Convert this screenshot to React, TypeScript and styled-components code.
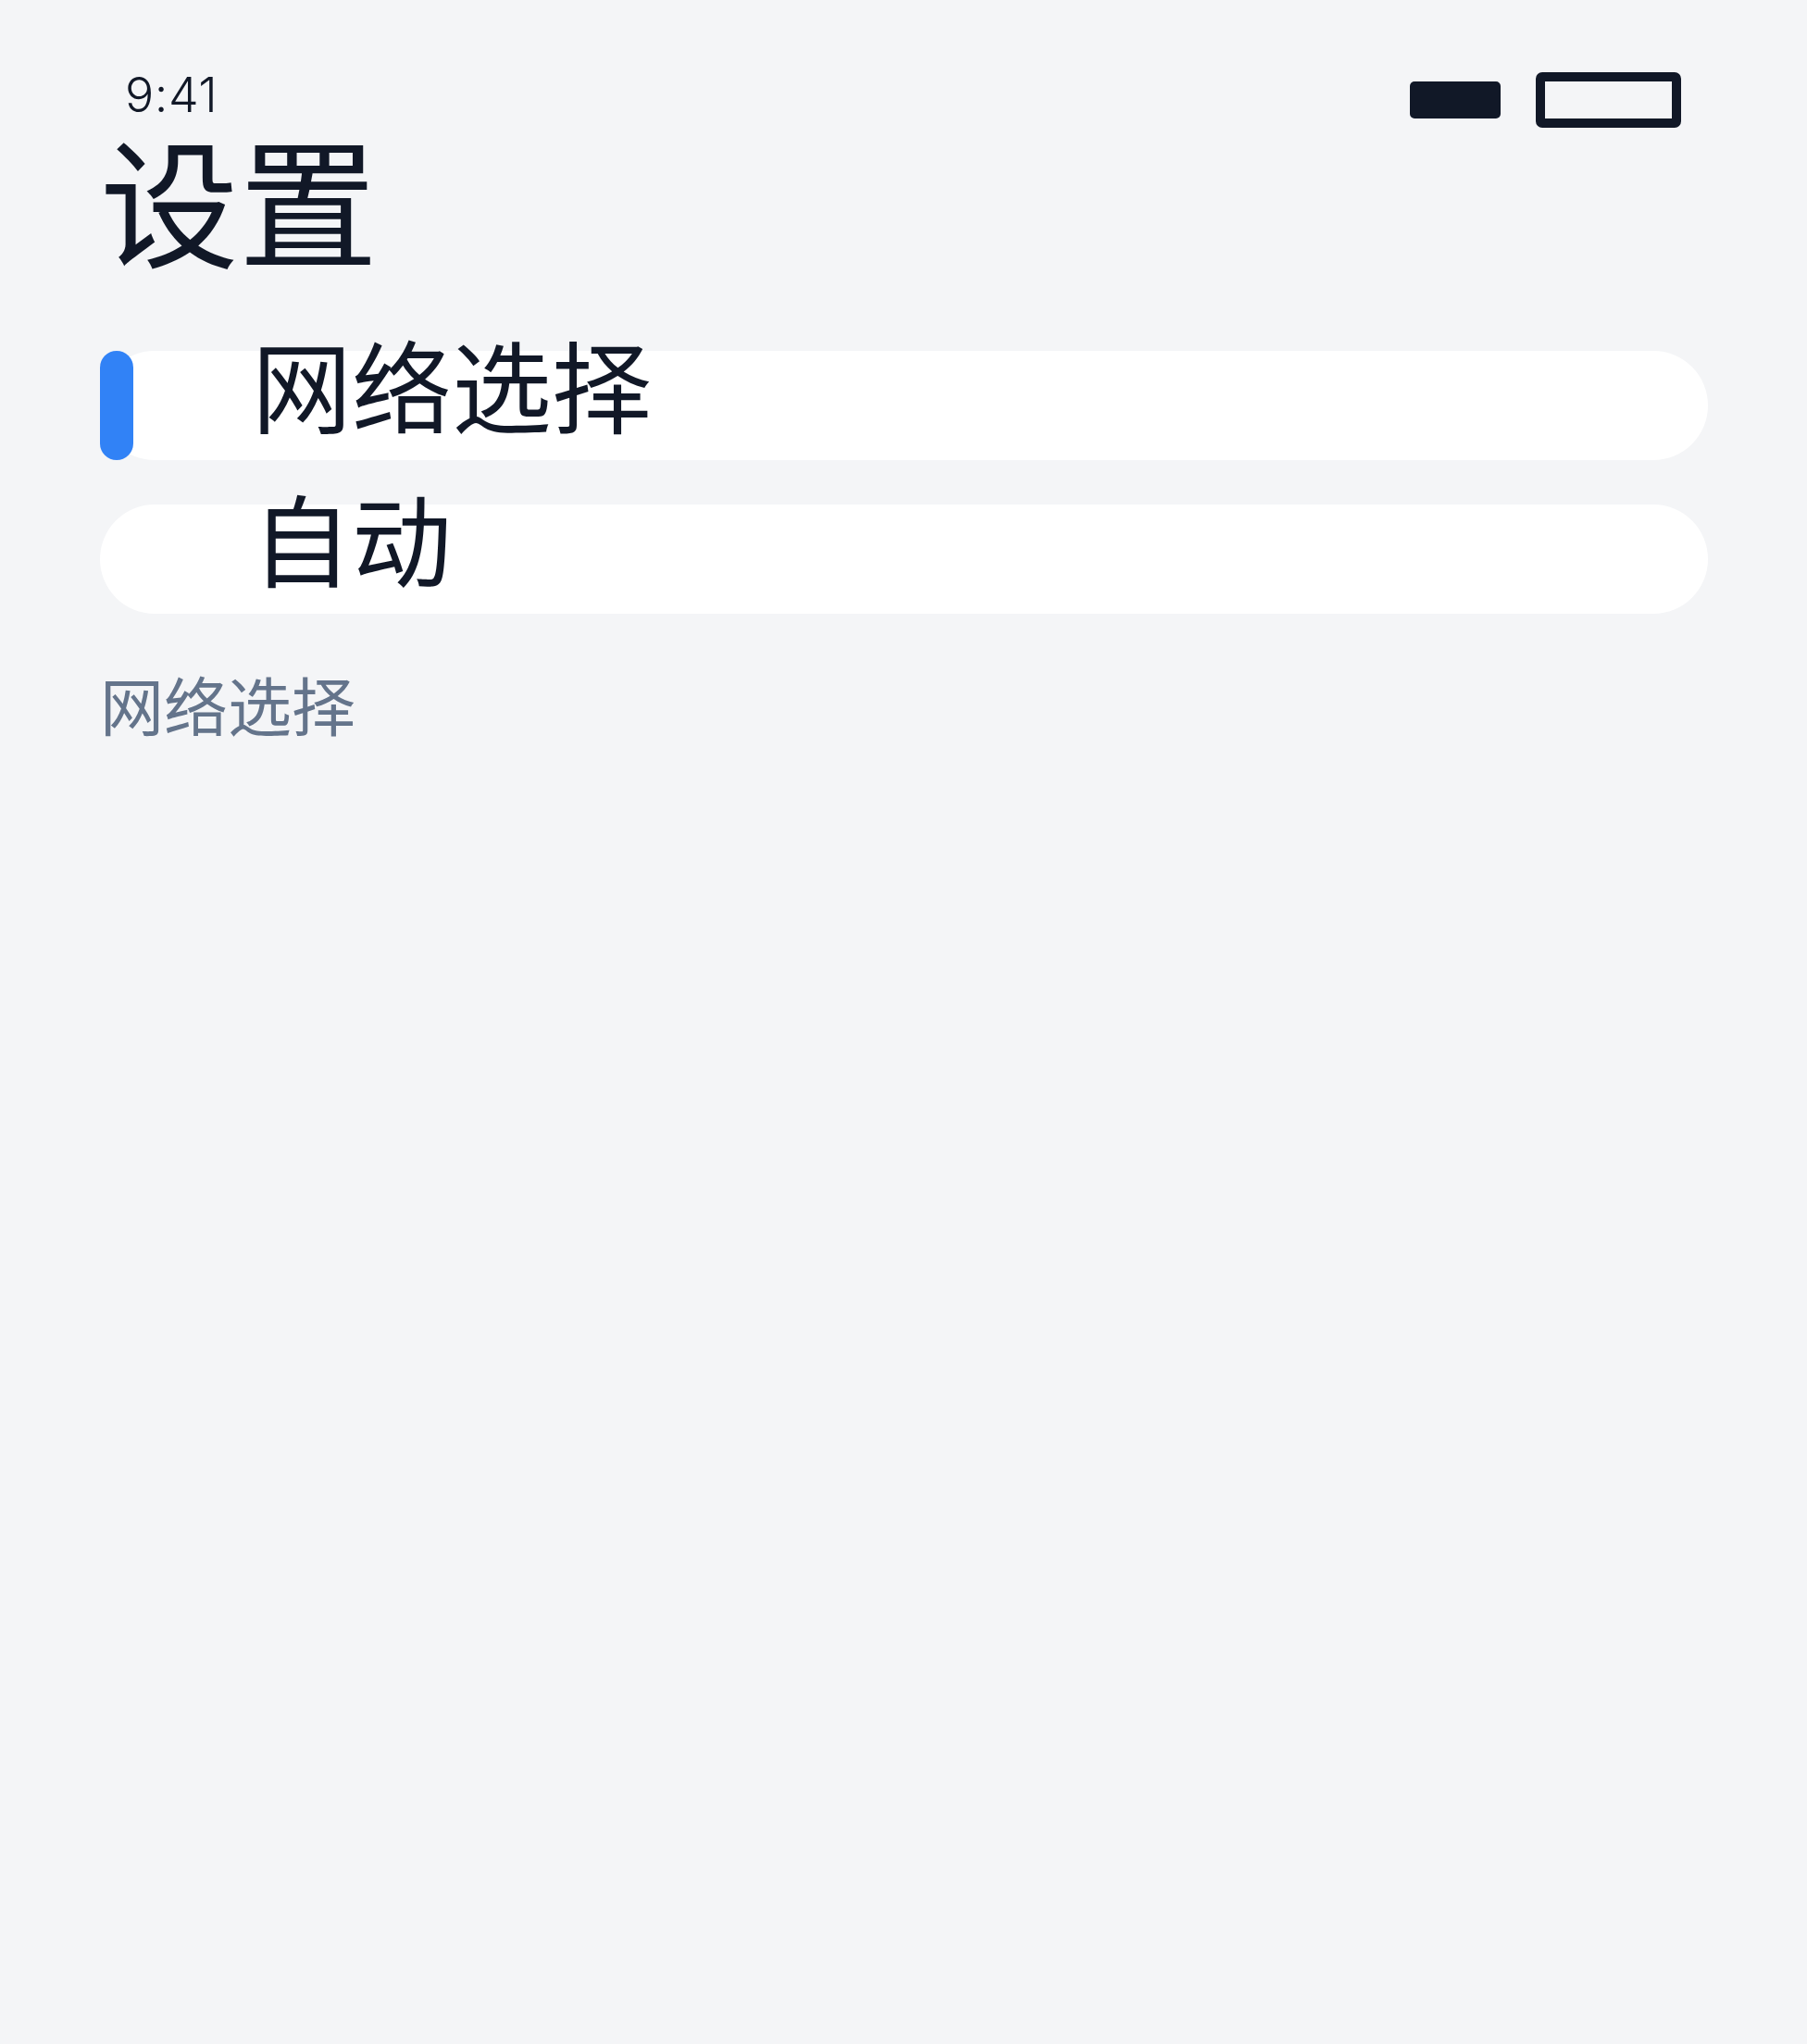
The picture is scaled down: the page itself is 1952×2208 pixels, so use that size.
import React from "react";
import styled, { createGlobalStyle } from "styled-components";

const GlobalStyle = createGlobalStyle`
  html, body {
    margin: 0;
    padding: 0;
    background: #f4f5f7;
  }
  body {
    font-family: "Noto Sans CJK SC", "Noto Sans", sans-serif;
    color: #111827;
  }
`;

const Page = styled.div`
  min-height: 2208px;
  box-sizing: border-box;
  padding: 78px 107px 0 108px;
  background: #f4f5f7;
  display: flex;
  flex-direction: column;
`;

const StatusBar = styled.div`
  display: flex;
  justify-content: space-between;
  align-items: flex-start;
  height: 60px;
  padding: 0 29px 0 27px;
`;

const Time = styled.span`
  font-family: Inter, "Liberation Sans", sans-serif;
  font-weight: 300;
  font-size: 52px;
  line-height: 52px;
  letter-spacing: 0.5px;
  color: #111827;
  margin-top: -1px;
`;

const StatusIcons = styled.div`
  display: flex;
  align-items: center;
  gap: 38px;
  height: 60px;
`;

const Signal = styled.div`
  width: 98px;
  height: 40px;
  border-radius: 5px;
  background: #111827;
`;

const Battery = styled.div`
  box-sizing: border-box;
  width: 157px;
  height: 60px;
  border: 10px solid #111827;
  border-radius: 7px;
`;

const Title = styled.h1`
  margin: 0;
  font-size: 150px;
  font-weight: 400;
  line-height: 150px;
  color: #111827;
`;

const List = styled.div`
  display: flex;
  flex-direction: column;
  gap: 48px;
  margin-top: 91px;
`;

const Row = styled.div`
  position: relative;
  display: flex;
  align-items: flex-start;
  height: 118px;
  border-radius: 59px;
  background: #ffffff;
  padding-left: 164px;
`;

const Indicator = styled.div`
  position: absolute;
  left: 0;
  top: 0;
  width: 36px;
  height: 100%;
  border-radius: 18px;
  background: #3182f6;
`;

const RowLabel = styled.span`
  font-size: 108px;
  line-height: 108px;
  margin-top: -20px;
  color: #111827;
`;

const SectionLabel = styled.div`
  margin-top: 62px;
  font-size: 69px;
  line-height: 70px;
  color: #64748b;
`;

const items = [
  { label: "网络选择", active: true },
  { label: "自动", active: false },
];

export default function App() {
  return (
    <>
      <GlobalStyle />
      <Page>
        <StatusBar>
          <Time>9:41</Time>
          <StatusIcons>
            <Signal />
            <Battery />
          </StatusIcons>
        </StatusBar>
        <Title>设置</Title>
        <List>
          {items.map((it) => (
            <Row key={it.label}>
              {it.active && <Indicator />}
              <RowLabel>{it.label}</RowLabel>
            </Row>
          ))}
        </List>
        <SectionLabel>网络选择</SectionLabel>
      </Page>
    </>
  );
}
